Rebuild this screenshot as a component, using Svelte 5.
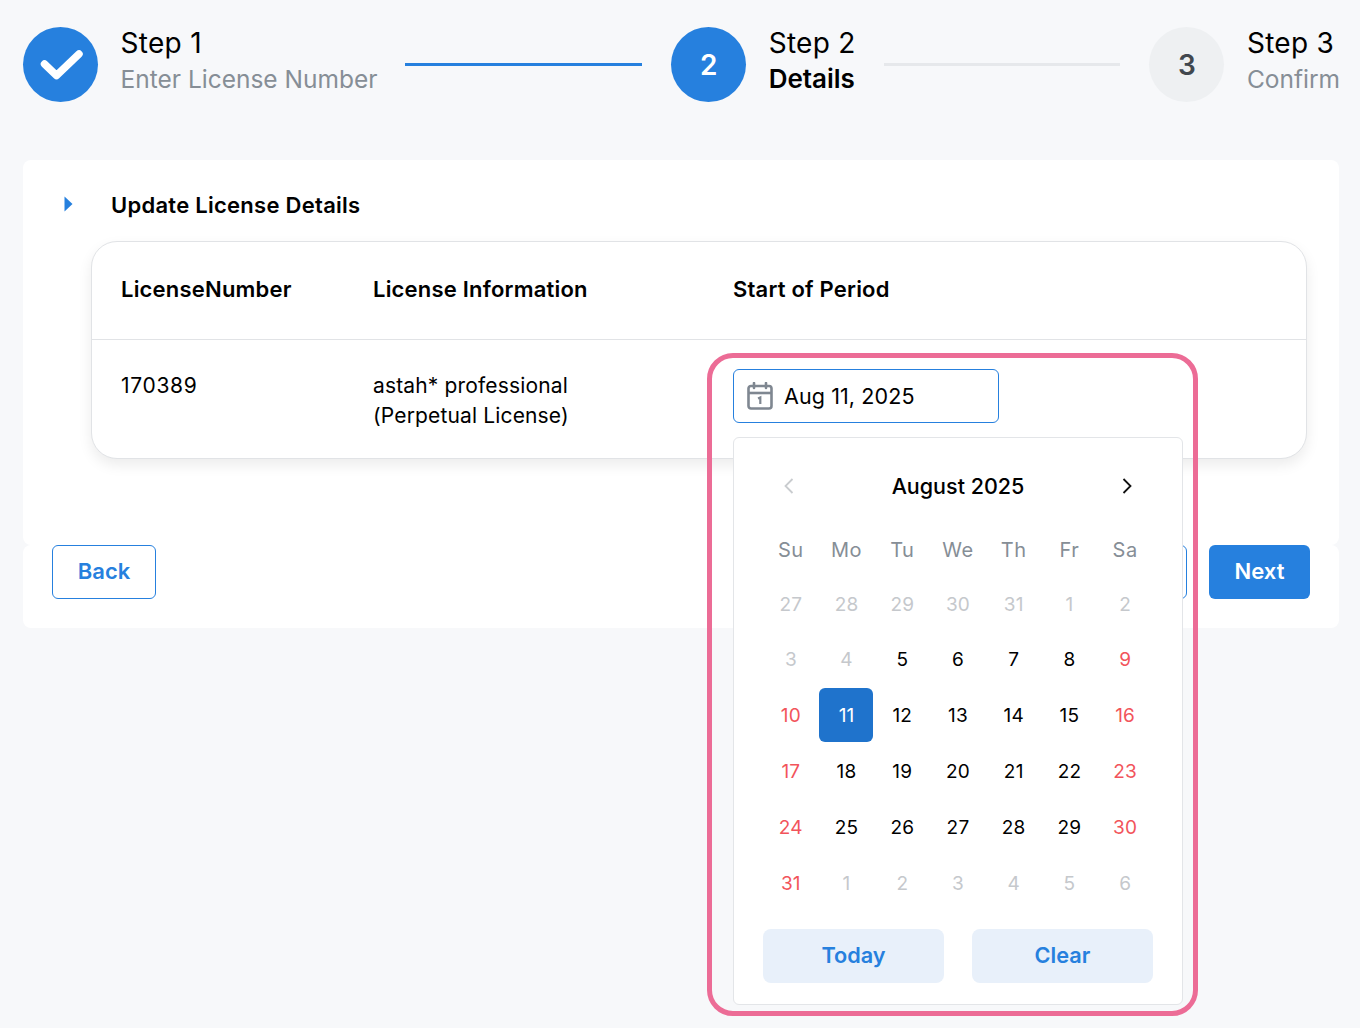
<script>
  const weekdays = ["Su", "Mo", "Tu", "We", "Th", "Fr", "Sa"];

  const before = [27, 28, 29, 30, 31];
  const after = [1, 2, 3, 4, 5, 6];

  // Aug 2025 starts on a Friday, 1-4 are greyed out because they are in the past
  function dayClass(day, index, muted) {
    if (muted) return "day muted";
    if (day === 11) return "day selected";
    if (index % 7 === 0 || index % 7 === 6) return "day weekend";
    return "day";
  }

  const days = [];
  for (const d of before) days.push({ d, muted: true });
  for (let d = 1; d <= 31; d++) days.push({ d, muted: d < 5 });
  for (const d of after) days.push({ d, muted: true });
</script>

<div class="page">
  <div class="stepper">
    <div class="step">
      <div class="circle active">
        <svg width="44" height="32" viewBox="0 0 44 32" fill="none">
          <path d="M5.5 15 L17.5 26.5 L40 5" stroke="#fff" stroke-width="7.5" stroke-linecap="round" stroke-linejoin="round" />
        </svg>
      </div>
      <div class="step_text">
        <div class="step_title">Step 1</div>
        <div class="step_sub">Enter License Number</div>
      </div>
    </div>
    <div class="line done"></div>
    <div class="step">
      <div class="circle active">2</div>
      <div class="step_text">
        <div class="step_title">Step 2</div>
        <div class="step_sub current">Details</div>
      </div>
    </div>
    <div class="line"></div>
    <div class="step">
      <div class="circle">3</div>
      <div class="step_text">
        <div class="step_title">Step 3</div>
        <div class="step_sub">Confirm</div>
      </div>
    </div>
  </div>

  <div class="card">
    <div class="card_head">
      <svg width="9" height="16" viewBox="0 0 9 16"><path d="M0.5 0.5 L8.5 8 L0.5 15.5 Z" fill="#2680de" /></svg>
      <h2>Update License Details</h2>
    </div>

    <div class="table">
      <div class="row head">
        <div class="col1">LicenseNumber</div>
        <div class="col2">License Information</div>
        <div class="col3">Start of Period</div>
      </div>
      <div class="row body">
        <div class="col1 num">170389</div>
        <div class="col2 info">astah* professional<br />(Perpetual License)</div>
        <div class="col3 picker">
          <div class="date_input">
            <svg width="26" height="28" viewBox="0 0 26 28" fill="none" stroke="#7f8791" stroke-width="2.6">
              <rect x="1.5" y="4" width="23" height="22.5" rx="2.5" />
              <path d="M1.5 11 H24.5" />
              <path d="M7 1 V6 M19 1 V6" stroke-linecap="round" />
              <path d="M11 16.5 L13.3 15.5 V22" stroke-width="2.2" />
            </svg>
            <span>Aug 11, 2025</span>
          </div>

          <div class="calendar">
            <div class="cal_head">
              <svg width="12" height="18" viewBox="0 0 12 18" fill="none" stroke="#c9cccf" stroke-width="1.8"><path d="M9.5 2 L2.5 9 L9.5 16" /></svg>
              <span>August 2025</span>
              <svg width="12" height="18" viewBox="0 0 12 18" fill="none" stroke="#111" stroke-width="1.8"><path d="M2.5 2 L9.5 9 L2.5 16" /></svg>
            </div>
            <div class="grid">
              {#each weekdays as w}
                <div class="wd">{w}</div>
              {/each}
              {#each days as item, i}
                <div class={dayClass(item.d, i, item.muted)}>{item.d}</div>
              {/each}
            </div>
            <div class="cal_foot">
              <button class="soft">Today</button>
              <button class="soft">Clear</button>
            </div>
          </div>

          <div class="highlight"></div>
        </div>
      </div>
    </div>
  </div>

  <div class="actions">
    <button class="btn outline">Back</button>
    <div class="right_btns">
      <!-- sits behind the calendar popup, only its right edge shows -->
      <button class="btn outline" aria-label="Save"></button>
      <button class="btn primary">Next</button>
    </div>
  </div>
</div>

<style>
  :global(body) {
    background: #f7f8fa;
    font-family: Inter, "Liberation Sans", sans-serif;
    color: #000;
  }

  .page {
    height: 1028px;
    padding: 27px 21px 0 23px;
    box-sizing: border-box;
    overflow: hidden;
  }

  .stepper {
    display: flex;
    align-items: center;
    height: 75px;
  }

  .step {
    display: flex;
    align-items: center;
    gap: 22.5px;
  }

  .step_text {
    padding-bottom: 7px;
    margin-right: -1px;
  }

  .circle {
    width: 75px;
    height: 75px;
    border-radius: 50%;
    background: #eef0f2;
    color: #41474e;
    display: flex;
    align-items: center;
    justify-content: center;
    font-size: 28px;
    font-weight: 600;
  }

  .circle.active {
    background: #2680de;
    color: #fff;
  }

  .step_title {
    font-size: 28px;
    line-height: 36px;
    letter-spacing: 0.3px;
  }

  .step_sub {
    font-size: 24.5px;
    line-height: 36px;
    color: #868e96;
  }

  .step_sub.current {
    color: #000;
    font-size: 26px;
    font-weight: 600;
  }

  .line {
    flex: 1;
    height: 3px;
    margin: 0 29px;
    background: #e6e8eb;
  }

  .line.done {
    background: #2680de;
  }

  .card {
    margin-top: 58px;
    height: 385px;
    background: #fff;
    border-radius: 8px;
    box-sizing: border-box;
    padding: 30px 32px 0 40px;
  }

  .card_head {
    display: flex;
    align-items: center;
    gap: 38px;
    height: 28px;
    margin-left: 1px;
  }

  .card_head h2 {
    margin: 0;
    padding-top: 1px;
    font-size: 22px;
    font-weight: 600;
    line-height: 28px;
    letter-spacing: 0.27px;
  }

  .table {
    margin: 23px 0 0 28px;
    height: 218px;
    box-sizing: border-box;
    background: #fff;
    border: 1px solid #e1e3e6;
    border-radius: 26px;
    box-shadow: 0 6px 14px rgba(0, 0, 0, 0.08);
  }

  .row {
    display: flex;
    padding-left: 29px;
    font-size: 21px;
    line-height: 30px;
    letter-spacing: 0.15px;
  }

  .row.head {
    height: 98px;
    padding-bottom: 4px;
    align-items: center;
    font-size: 22px;
    letter-spacing: 0.2px;
    font-weight: 600;
    border-bottom: 1px solid #e1e3e6;
    box-sizing: border-box;
  }

  .col1 {
    width: 252px;
  }

  .col1.num {
    letter-spacing: 0.7px;
  }

  .col2 {
    width: 360px;
  }

  .row.body {
    padding-top: 31px;
  }

  .picker {
    position: relative;
    top: -2px;
  }

  .date_input {
    position: absolute;
    left: 0;
    top: 0;
    width: 266px;
    height: 54px;
    box-sizing: border-box;
    background: #fff;
    border: 1px solid #2680de;
    border-radius: 6px;
    display: flex;
    align-items: center;
    gap: 11px;
    padding-left: 13px;
    font-size: 21.5px;
    letter-spacing: 0.1px;
    white-space: nowrap;
  }

  .calendar {
    position: absolute;
    z-index: 2;
    left: 0;
    top: 68px;
    width: 450px;
    height: 568px;
    box-sizing: border-box;
    background: #fff;
    border: 1px solid #e3e5e8;
    border-radius: 6px;
    padding: 27px 29px 0;
    letter-spacing: 0;
  }

  .cal_head {
    display: flex;
    align-items: center;
    justify-content: space-between;
    height: 42px;
    padding: 0 20px;
    font-size: 21.5px;
    font-weight: 500;
  }

  .grid {
    margin-top: 14px;
    display: grid;
    grid-template-columns: repeat(7, 1fr);
    grid-auto-rows: 55.8px;
    width: 390px;
  }

  .wd,
  .day {
    display: flex;
    align-items: center;
    justify-content: center;
    margin: 1px;
    border-radius: 6px;
    font-size: 19px;
    letter-spacing: 0.2px;
  }

  .wd {
    color: #868e96;
    font-size: 20px;
    letter-spacing: 0.5px;
    padding-top: 2px;
  }

  .day.muted {
    color: #c5c8cc;
  }

  .day.weekend {
    color: #f2545b;
  }

  .day.selected {
    margin: 0 1.8px 1.8px 0;
    padding: 1.8px 0 0 1.8px;
    box-sizing: border-box;
    background: #1f73cc;
    color: #fff;
  }

  .cal_foot {
    margin-top: 17px;
    display: flex;
    gap: 28px;
  }

  .soft {
    flex: 1;
    height: 54px;
    border: 0;
    border-radius: 8px;
    padding: 0 0 2px;
    background: #e8f0fa;
    color: #2680de;
    font-family: inherit;
    font-size: 21.7px;
    font-weight: 600;
  }

  .highlight {
    position: absolute;
    z-index: 3;
    left: -26px;
    top: -16px;
    width: 491px;
    height: 663px;
    box-sizing: border-box;
    border: 5px solid #ec6c96;
    border-radius: 26px;
    pointer-events: none;
  }

  .actions {
    height: 83px;
    box-sizing: border-box;
    background: #fff;
    border-radius: 8px;
    padding: 0 29px;
    display: flex;
    justify-content: space-between;
    align-items: flex-start;
  }

  .right_btns {
    display: flex;
    gap: 22px;
  }

  .btn {
    height: 54px;
    border-radius: 6px;
    font-family: inherit;
    font-size: 22px;
    font-weight: 600;
    padding: 0 0 2px;
    width: 104px;
  }

  .btn.outline {
    background: #fff;
    border: 1px solid #2680de;
    color: #2680de;
  }

  .btn.primary {
    width: 101px;
    background: #2680de;
    border: 0;
    color: #fff;
  }
</style>
